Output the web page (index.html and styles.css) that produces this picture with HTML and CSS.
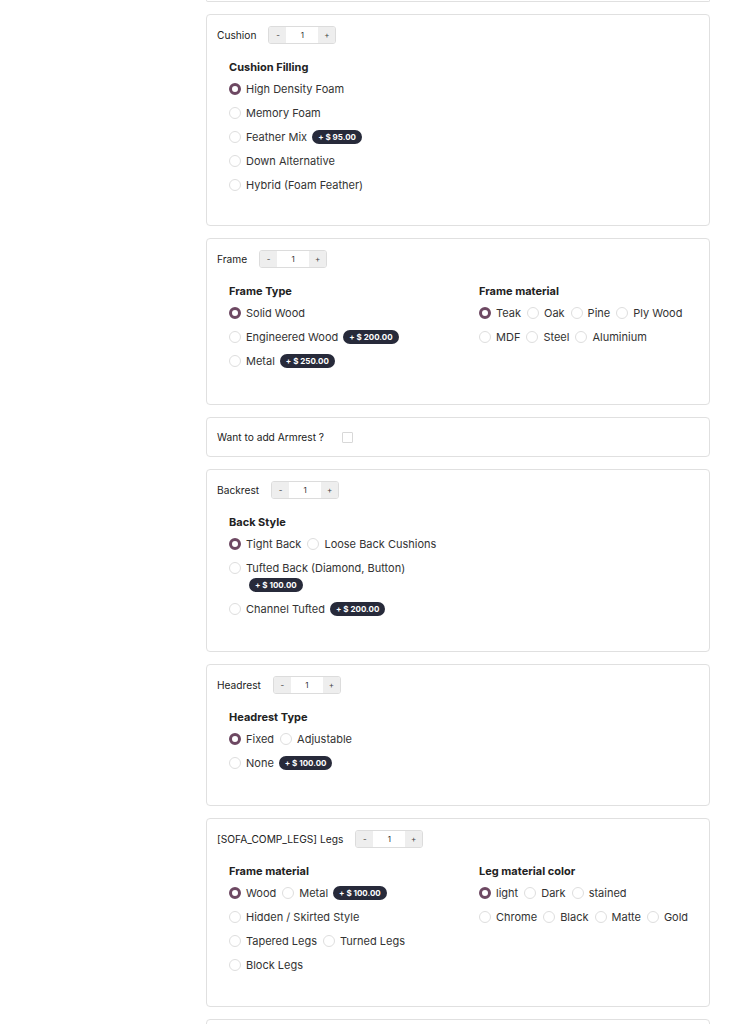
FILE: index.html
```html
<!DOCTYPE html>
<html lang="en">
<head>
<meta charset="utf-8">
<title>Sofa configurator</title>
<link rel="stylesheet" href="styles.css">
</head>
<body>
<div class="page">
  <div class="card card-tail"></div>

  <section class="card">
    <div class="card-head">
      <span class="comp-name">Cushion</span>
      <div class="qty"><span class="qty-btn">-</span><span class="qty-val">1</span><span class="qty-btn">+</span></div>
    </div>
    <div class="attrs">
      <div class="attr">
        <div class="attr-title">Cushion Filling</div>
        <div class="opt-row"><label class="opt"><span class="radio checked"></span>High Density Foam</label></div>
        <div class="opt-row"><label class="opt"><span class="radio"></span>Memory Foam</label></div>
        <div class="opt-row"><label class="opt"><span class="radio"></span>Feather Mix<span class="badge">+ $ 95.00</span></label></div>
        <div class="opt-row"><label class="opt"><span class="radio"></span>Down Alternative</label></div>
        <div class="opt-row"><label class="opt"><span class="radio"></span>Hybrid (Foam Feather)</label></div>
      </div>
    </div>
  </section>

  <section class="card card-pad-3">
    <div class="card-head">
      <span class="comp-name">Frame</span>
      <div class="qty"><span class="qty-btn">-</span><span class="qty-val">1</span><span class="qty-btn">+</span></div>
    </div>
    <div class="attrs">
      <div class="attr">
        <div class="attr-title">Frame Type</div>
        <div class="opt-row"><label class="opt"><span class="radio checked"></span>Solid Wood</label></div>
        <div class="opt-row"><label class="opt"><span class="radio"></span>Engineered Wood<span class="badge">+ $ 200.00</span></label></div>
        <div class="opt-row"><label class="opt"><span class="radio"></span>Metal<span class="badge">+ $ 250.00</span></label></div>
      </div>
      <div class="attr">
        <div class="attr-title">Frame material</div>
        <div class="opt-row">
          <label class="opt"><span class="radio checked"></span>Teak</label>
          <label class="opt"><span class="radio"></span>Oak</label>
          <label class="opt"><span class="radio"></span>Pine</label>
          <label class="opt"><span class="radio"></span>Ply Wood</label>
        </div>
        <div class="opt-row">
          <label class="opt"><span class="radio"></span>MDF</label>
          <label class="opt"><span class="radio"></span>Steel</label>
          <label class="opt"><span class="radio"></span>Aluminium</label>
        </div>
      </div>
    </div>
  </section>

  <section class="card card-inline">
    <span class="comp-name">Want to add Armrest ?</span>
    <span class="checkbox"></span>
  </section>

  <section class="card card-pad-2">
    <div class="card-head">
      <span class="comp-name">Backrest</span>
      <div class="qty"><span class="qty-btn">-</span><span class="qty-val">1</span><span class="qty-btn">+</span></div>
    </div>
    <div class="attrs">
      <div class="attr">
        <div class="attr-title">Back Style</div>
        <div class="opt-row">
          <label class="opt"><span class="radio checked"></span>Tight Back</label>
          <label class="opt"><span class="radio"></span>Loose Back Cushions</label>
        </div>
        <div class="opt-row opt-row-tall">
          <label class="opt opt-tall"><span class="radio"></span><span class="opt-text"><span class="opt-line">Tufted Back (Diamond, Button)</span><span class="badge badge-below">+ $ 100.00</span></span></label>
        </div>
        <div class="opt-row"><label class="opt"><span class="radio"></span>Channel Tufted<span class="badge">+ $ 200.00</span></label></div>
      </div>
    </div>
  </section>

  <section class="card card-pad-2">
    <div class="card-head">
      <span class="comp-name">Headrest</span>
      <div class="qty"><span class="qty-btn">-</span><span class="qty-val">1</span><span class="qty-btn">+</span></div>
    </div>
    <div class="attrs">
      <div class="attr">
        <div class="attr-title">Headrest Type</div>
        <div class="opt-row">
          <label class="opt"><span class="radio checked"></span>Fixed</label>
          <label class="opt"><span class="radio"></span>Adjustable</label>
        </div>
        <div class="opt-row"><label class="opt"><span class="radio"></span>None<span class="badge">+ $ 100.00</span></label></div>
      </div>
    </div>
  </section>

  <section class="card card-pad-1">
    <div class="card-head">
      <span class="comp-name">[SOFA_COMP_LEGS] Legs</span>
      <div class="qty"><span class="qty-btn">-</span><span class="qty-val">1</span><span class="qty-btn">+</span></div>
    </div>
    <div class="attrs">
      <div class="attr">
        <div class="attr-title">Frame material</div>
        <div class="opt-row">
          <label class="opt"><span class="radio checked"></span>Wood</label>
          <label class="opt"><span class="radio"></span>Metal<span class="badge">+ $ 100.00</span></label>
        </div>
        <div class="opt-row"><label class="opt"><span class="radio"></span>Hidden / Skirted Style</label></div>
        <div class="opt-row">
          <label class="opt"><span class="radio"></span>Tapered Legs</label>
          <label class="opt"><span class="radio"></span>Turned Legs</label>
        </div>
        <div class="opt-row"><label class="opt"><span class="radio"></span>Block Legs</label></div>
      </div>
      <div class="attr">
        <div class="attr-title">Leg material color</div>
        <div class="opt-row">
          <label class="opt"><span class="radio checked"></span>light</label>
          <label class="opt"><span class="radio"></span>Dark</label>
          <label class="opt"><span class="radio"></span>stained</label>
        </div>
        <div class="opt-row">
          <label class="opt"><span class="radio"></span>Chrome</label>
          <label class="opt"><span class="radio"></span>Black</label>
          <label class="opt"><span class="radio"></span>Matte</label>
          <label class="opt"><span class="radio"></span>Gold</label>
        </div>
      </div>
    </div>
  </section>

  <section class="card card-next"></section>
</div>
</body>
</html>
```

FILE: styles.css
```css
* { box-sizing: border-box; }

html, body {
  margin: 0;
  background: #ffffff;
  font-family: Inter, "Noto Sans", "DejaVu Sans", sans-serif;
  color: #2a2a2a;
}

.page {
  width: 710px;
  padding-left: 206px;
  display: flex;
  flex-direction: column;
  gap: 12px;
}

.card {
  border: 1px solid #e0e0e0;
  border-radius: 4px;
  background: #fff;
  padding: 11px 10px 28px;
}

.card-pad-1 { padding-bottom: 29px; }
.card-pad-2 { padding-bottom: 30px; }
.card-pad-3 { padding-bottom: 31px; }

.card-tail {
  height: 2px;
  padding: 0;
  border-top: none;
  border-radius: 0 0 4px 4px;
}

.card-next {
  height: 40px;
  padding: 0;
}

.card-inline {
  height: 40px;
  padding: 0 10px;
  display: flex;
  align-items: center;
  gap: 18px;
}

.card-head {
  display: flex;
  align-items: center;
  gap: 12px;
  height: 18px;
}

.comp-name {
  font-size: 10.2px;
  color: #222;
}

.qty {
  display: flex;
  height: 18px;
  border: 1px solid #dcdcdc;
  border-radius: 3px;
  overflow: hidden;
}

.qty-btn {
  width: 17px;
  background: #eeeeee;
  display: flex;
  align-items: center;
  justify-content: center;
  font-size: 8px;
  color: #444;
}

.qty-val {
  width: 32px;
  background: #fff;
  display: flex;
  align-items: center;
  justify-content: center;
  font-size: 8px;
  color: #333;
}

.attrs {
  margin-top: 15px;
  padding-left: 12px;
  display: grid;
  grid-template-columns: 250px 1fr;
}

.attr-title {
  font-size: 11px;
  font-weight: 700;
  line-height: 16px;
  margin-bottom: 2px;
  color: #222;
}

.opt-row {
  display: flex;
  align-items: center;
  gap: 6px;
  height: 24px;
}

.opt-row-tall {
  height: 41px;
  align-items: flex-start;
}

.opt {
  display: flex;
  align-items: center;
  font-size: 11px;
  color: #333;
  white-space: nowrap;
}

.opt-tall {
  align-items: flex-start;
}

.opt-tall .radio {
  margin-top: 6px;
}

.opt-text {
  display: flex;
  flex-direction: column;
  align-items: flex-start;
}

.opt-line {
  line-height: 24px;
}

.radio {
  width: 12px;
  height: 12px;
  border: 1px solid #dedede;
  border-radius: 50%;
  background: #fff;
  margin-right: 5px;
  flex: none;
}

.radio.checked {
  border: 3.5px solid #6d4862;
}

.badge {
  display: inline-flex;
  align-items: center;
  height: 14px;
  padding: 0 6px;
  margin-left: 5px;
  border-radius: 7px;
  background: #272a3a;
  color: #fff;
  font-size: 8px;
  font-weight: 700;
}

.badge-below {
  margin-left: 3px;
  margin-top: -2px;
}

.checkbox {
  width: 11px;
  height: 11px;
  border: 1px solid #d8d8d8;
  border-radius: 1px;
  background: #fff;
}
```
